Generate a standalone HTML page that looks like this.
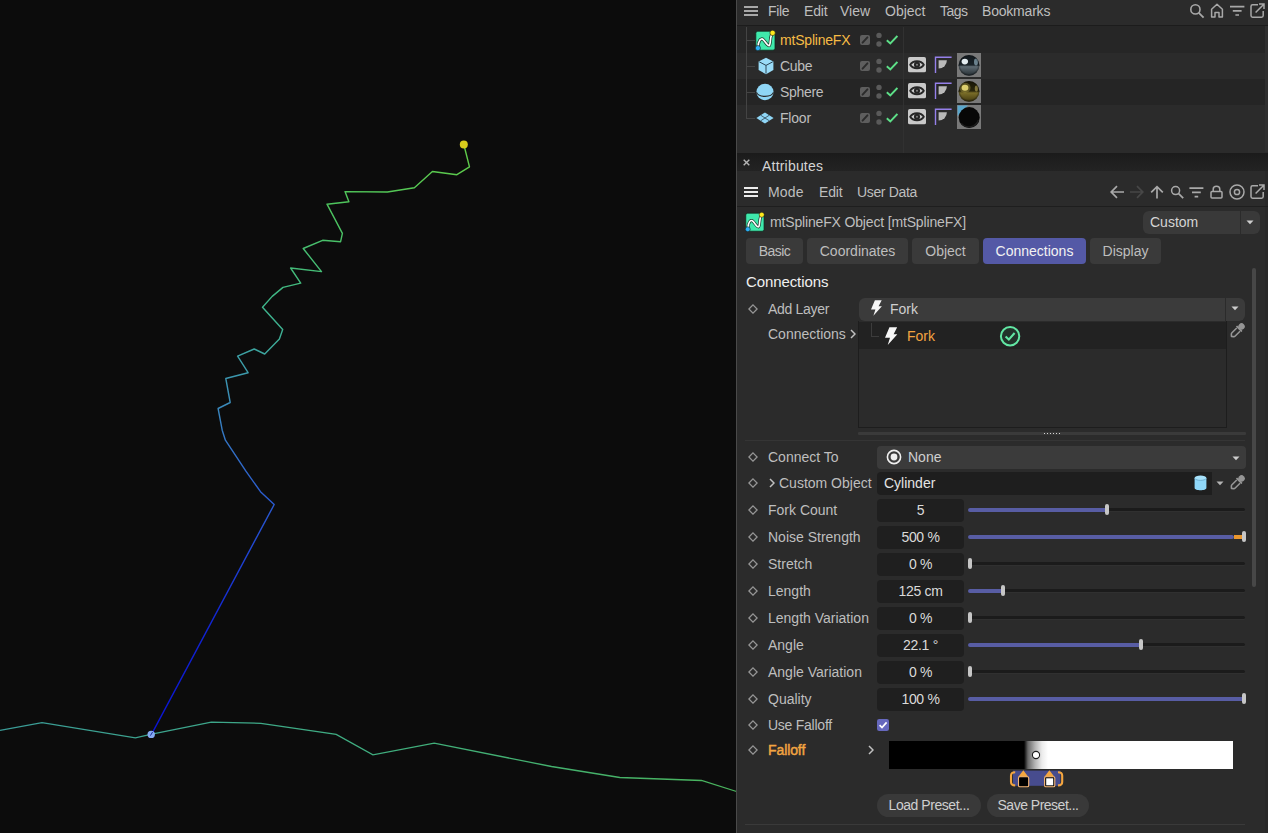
<!DOCTYPE html>
<html lang="en">
<head>
<meta charset="utf-8">
<title>mtSplineFX Attributes</title>
<style>
*{box-sizing:border-box;margin:0;padding:0}
html,body{width:1268px;height:833px;overflow:hidden;background:#0c0c0c}
body{position:relative;font-family:"Liberation Sans",sans-serif;font-size:14px;color:#c4c4c4;line-height:1}
.abs,.t,.bx{position:absolute}
.t{white-space:nowrap;height:18px;line-height:18px;font-size:14px;color:#bebebe}
#vp{position:absolute;left:0;top:0;width:736px;height:833px;background:#0c0c0c}
#panel{position:absolute;left:736px;top:0;width:532px;height:833px;background:#2b2b2b;border-left:1px solid #4a4a4a}
svg{position:absolute;overflow:visible}
.fld{position:absolute;left:877px;width:87px;height:23px;background:#1f1f1f;border-radius:4px;text-align:center;line-height:23px;color:#dadada;font-size:14px;letter-spacing:-0.3px}
.trk{position:absolute;left:968px;width:277px;height:3.5px;background:#1b1b1b;border-radius:2px;box-shadow:0 1px 0 #303030}
.fill{position:absolute;left:968px;height:4px;background:#585da4;border-radius:2px}
.hnd{position:absolute;width:4px;height:11px;background:#c6c6c6;border-radius:2px}
.dia{position:absolute;left:749px;width:8px;height:8px}
.tab{position:absolute;top:238px;height:26px;background:#3a3a3a;border-radius:4px;text-align:center;line-height:26px;font-size:14px;color:#bebebe}
</style>
</head>
<body>
<div id="vp">
<svg width="736" height="833" viewBox="0 0 736 833" style="left:0;top:0">
<defs>
<linearGradient id="g1" gradientUnits="userSpaceOnUse" x1="151" y1="734" x2="464" y2="145">
<stop offset="0" stop-color="#0a12d2"/><stop offset="0.2" stop-color="#1226d2"/><stop offset="0.39" stop-color="#2a5ad0"/><stop offset="0.48" stop-color="#3a88bc"/><stop offset="0.56" stop-color="#3c9fa6"/><stop offset="0.65" stop-color="#3eb68a"/><stop offset="0.82" stop-color="#4cc45e"/><stop offset="1" stop-color="#60cc48"/>
</linearGradient>
<linearGradient id="g2" gradientUnits="userSpaceOnUse" x1="0" y1="0" x2="736" y2="0">
<stop offset="0" stop-color="#3a9c98"/><stop offset="0.5" stop-color="#3fae80"/><stop offset="1" stop-color="#49b45c"/>
</linearGradient>
</defs>
<polyline fill="none" stroke="url(#g2)" stroke-width="1.3" points="0,730.3 42,722.7 135.4,737.9 150.6,734.4 211.3,722.1 260.9,723.3 336.2,734.4 372.9,754.8 434.2,743.1 551.5,766.5 619.8,777.5 701.5,780.5 736.5,791.5"/>
<polyline fill="none" stroke="url(#g1)" stroke-width="1.4" stroke-linejoin="round" points="151.5,734.3 274.2,504.5 260.5,491.7 245.9,471.2 225.4,440.2 222.2,430.2 218.1,408.5 230.2,402.5 225.8,378.5 248.1,372.7 237.6,356.2 254.2,349 264.7,354 279.4,338.9 282.7,329.5 262.5,307.2 272.2,296.4 283,287.4 300.7,283.1 290.6,268 321.5,271.6 303.2,248.5 322.6,240.3 340.6,241.7 342.4,233.4 327,204.2 348.9,201.7 345,191.6 387.4,192 414.4,187.7 432.4,171.5 456.9,174.7 469.5,166.8 463.8,144.5"/>
<circle cx="463.8" cy="144.5" r="4" fill="#d8cc1c"/>
<circle cx="151.2" cy="734.4" r="3.7" fill="#86aaf2"/><path d="M150.4 735.6 L152.6 732" stroke="#1c2a9c" stroke-width="1"/>
</svg>
</div>
<div id="panel"></div>

<!-- ===== Object manager ===== -->
<div class="bx" style="left:737px;top:0;width:531px;height:25px;background:#2b2b2b"></div>
<div class="bx" style="left:737px;top:25px;width:531px;height:1px;background:#1c1c1c"></div>
<div class="bx" style="left:737px;top:26px;width:531px;height:26.5px;background:#262626"></div>
<div class="bx" style="left:737px;top:78.5px;width:531px;height:26px;background:#252525"></div>
<div class="bx" style="left:903px;top:27px;width:1px;height:126px;background:#313131"></div>
<div class="bx" style="left:1265px;top:26px;width:3px;height:126px;background:#2f2f2f"></div>
<svg width="0" height="0" style="left:0;top:0">
<defs>
<symbol id="lay" viewBox="0 0 10 10"><rect x="0" y="0" width="10" height="10" rx="2" fill="#5e5e5e"/><path d="M2.6 7.6 L7.4 2.4" stroke="#2b2b2b" stroke-width="2" stroke-linecap="round"/></symbol>
<symbol id="dots" viewBox="0 0 6 16"><circle cx="3" cy="3.4" r="2.7" fill="#5a5a5a"/><circle cx="3" cy="12" r="2.7" fill="#5a5a5a"/></symbol>
<symbol id="chk" viewBox="0 0 12 10"><path d="M0.8 5.2 L4.3 8.4 L11.4 0.9" fill="none" stroke="#5de088" stroke-width="1.9"/></symbol>
<symbol id="eye" viewBox="0 0 18 15.5"><rect x="0" y="0" width="18" height="15.5" rx="1.8" fill="#c9c9c9"/><path d="M2.2 7.8 C5 3 13 3 15.8 7.8 C13 12.4 5 12.4 2.2 7.8 Z" fill="none" stroke="#262626" stroke-width="1.9" stroke-linejoin="round"/><circle cx="9" cy="7.7" r="2" fill="#8a8a8a" stroke="#262626" stroke-width="2.1"/></symbol>
<symbol id="phong" viewBox="0 0 18 17"><path d="M1.5 17 V1.3 H17.6" fill="none" stroke="#9580ea" stroke-width="1.4"/><path d="M4.6 4.3 H12.9 A8.3 8.3 0 0 1 4.6 12.6 Z" fill="#b9b9b9"/></symbol>
<symbol id="mts" viewBox="0 0 21 21"><rect x="0.8" y="1.2" width="19.2" height="19" rx="2" fill="#3fe9ac" stroke="#10261c" stroke-width="0.8"/><path d="M3 17 C3.4 10.4 6 7.6 8.2 9.6 C10.4 11.6 12.6 16.2 14.2 15.6 C15.6 15 15 9 16.4 5" fill="none" stroke="#1a3a2c" stroke-width="3.2" stroke-linecap="round"/><path d="M3 17 C3.4 10.4 6 7.6 8.2 9.6 C10.4 11.6 12.6 16.2 14.2 15.6 C15.6 15 15 9 16.4 5" fill="none" stroke="#ffffff" stroke-width="1.7" stroke-linecap="round"/><circle cx="17.6" cy="2.9" r="2.7" fill="#ffe91c" stroke="#1c1c1c" stroke-width="0.6"/><circle cx="2.9" cy="18.1" r="2.6" fill="#2ab0f6" stroke="#1c1c1c" stroke-width="0.6"/></symbol>
<radialGradient id="mg1" cx="0.45" cy="0.35" r="0.65"><stop offset="0" stop-color="#dfe6ea"/><stop offset="0.25" stop-color="#6d7a82"/><stop offset="0.6" stop-color="#1c2328"/><stop offset="1" stop-color="#05080a"/></radialGradient>
<radialGradient id="mg2" cx="0.42" cy="0.38" r="0.65"><stop offset="0" stop-color="#e6d98a"/><stop offset="0.3" stop-color="#8a7a2a"/><stop offset="0.65" stop-color="#2a2408"/><stop offset="1" stop-color="#0a0903"/></radialGradient>
</defs>
</svg>
<!-- menu -->
<svg width="14" height="10" style="left:744px;top:6px"><rect x="0" y="0" width="14" height="2" fill="#a8a8a8"/><rect x="0" y="4" width="14" height="2" fill="#a8a8a8"/><rect x="0" y="8" width="14" height="2" fill="#a8a8a8"/></svg>
<div class="t" style="left:768px;top:2px;letter-spacing:-0.3px">File</div>
<div class="t" style="left:804px;top:2px;letter-spacing:-0.2px">Edit</div>
<div class="t" style="left:840px;top:2px">View</div>
<div class="t" style="left:885px;top:2px">Object</div>
<div class="t" style="left:940px;top:2px;letter-spacing:-0.5px">Tags</div>
<div class="t" style="left:982px;top:2px;letter-spacing:-0.2px">Bookmarks</div>
<!-- right icons of OM menu -->
<svg width="16" height="16" style="left:1189px;top:3px"><circle cx="6.4" cy="6.4" r="4.6" fill="none" stroke="#a8a8a8" stroke-width="1.6"/><path d="M9.8 9.8 L14.6 14.6" stroke="#a8a8a8" stroke-width="1.8"/></svg>
<svg width="14" height="15" style="left:1210px;top:3px"><path d="M1.6 14 V6.2 L7 1.2 L12.4 6.2 V14 H9 V9.6 H5 V14 Z" fill="none" stroke="#a8a8a8" stroke-width="1.5" stroke-linejoin="round"/></svg>
<svg width="15" height="12" style="left:1230px;top:5px"><path d="M0 1.6 H14.4 M2.8 5.8 H11.6 M5.4 10 H9" stroke="#a8a8a8" stroke-width="1.7"/></svg>
<svg width="15" height="15" style="left:1250px;top:3px"><path d="M8 1.8 H2.6 Q1 1.8 1 3.4 V12.6 Q1 14.2 2.6 14.2 H11.6 Q13.2 14.2 13.2 12.6 V8" fill="none" stroke="#a8a8a8" stroke-width="1.5"/><path d="M5.6 9.6 L13.6 1.4 M9 1 H14 V6" fill="none" stroke="#a8a8a8" stroke-width="1.5"/></svg>
<!-- tree lines -->
<div class="bx" style="left:746px;top:27px;width:1px;height:92px;background:#444"></div>
<div class="bx" style="left:746px;top:40px;width:9px;height:1px;background:#444"></div>
<div class="bx" style="left:746px;top:66px;width:9px;height:1px;background:#444"></div>
<div class="bx" style="left:746px;top:92px;width:9px;height:1px;background:#444"></div>
<div class="bx" style="left:746px;top:118px;width:9px;height:1px;background:#444"></div>
<!-- row 1 -->
<svg width="21" height="21" style="left:755.3px;top:29.6px"><use href="#mts"/></svg>
<div class="t" style="left:780px;top:31px;color:#f6bb45;letter-spacing:-0.2px">mtSplineFX</div>
<svg width="10" height="10" style="left:860px;top:35px"><use href="#lay"/></svg>
<svg width="6" height="16" style="left:876px;top:32px"><use href="#dots"/></svg>
<svg width="12" height="10" style="left:886.4px;top:34.8px"><use href="#chk"/></svg>
<!-- row 2 cube -->
<svg width="16" height="18" style="left:758px;top:57px"><path d="M8 0.8 L15.4 4.4 V13 L8 17.2 L0.6 13 V4.4 Z" fill="#9adcf8"/><path d="M1.2 4.8 L8 8.4 L14.8 4.8 M8 8.4 V16.6" fill="none" stroke="#2c4656" stroke-width="1"/></svg>
<div class="t" style="left:780px;top:57px;letter-spacing:-0.3px">Cube</div>
<svg width="10" height="10" style="left:860px;top:61px"><use href="#lay"/></svg>
<svg width="6" height="16" style="left:876px;top:58px"><use href="#dots"/></svg>
<svg width="12" height="10" style="left:886.4px;top:60.8px"><use href="#chk"/></svg>
<svg width="18" height="15.5" style="left:908.2px;top:57.1px"><use href="#eye"/></svg>
<svg width="18" height="17" style="left:934px;top:56px"><use href="#phong"/></svg>
<svg width="24" height="24" style="left:957px;top:53px"><defs><clipPath id="cs1"><circle cx="12" cy="12.3" r="10.4"/></clipPath><linearGradient id="lgc" x1="0" y1="0" x2="0" y2="1"><stop offset="0" stop-color="#10161a"/><stop offset="0.5" stop-color="#1a2329"/><stop offset="0.57" stop-color="#5f6b73"/><stop offset="0.8" stop-color="#3a444a"/><stop offset="1" stop-color="#1e262b"/></linearGradient><radialGradient id="rgc" cx="0.5" cy="0.5" r="0.5"><stop offset="0.7" stop-color="#000" stop-opacity="0"/><stop offset="1" stop-color="#000" stop-opacity="0.75"/></radialGradient></defs><rect width="24" height="24" fill="#797979"/><g clip-path="url(#cs1)"><rect width="24" height="24" fill="url(#lgc)"/><ellipse cx="7.8" cy="8.6" rx="3.2" ry="2.8" fill="#e4ecf0"/><ellipse cx="19" cy="9" rx="2" ry="3.4" fill="#7f9aa8" opacity="0.8"/><rect width="24" height="24" fill="url(#rgc)"/></g></svg>
<!-- row 3 sphere -->
<svg width="18" height="18" style="left:756px;top:83px"><ellipse cx="9" cy="9" rx="8.6" ry="8.2" fill="#8fd6f6"/><path d="M0.5 9.4 C2.6 14.6 15.4 14.6 17.5 9.4" fill="none" stroke="#2b2b2b" stroke-width="1.2"/></svg>
<div class="t" style="left:780px;top:83px;letter-spacing:-0.3px">Sphere</div>
<svg width="10" height="10" style="left:860px;top:87px"><use href="#lay"/></svg>
<svg width="6" height="16" style="left:876px;top:84px"><use href="#dots"/></svg>
<svg width="12" height="10" style="left:886.4px;top:86.8px"><use href="#chk"/></svg>
<svg width="18" height="15.5" style="left:908.2px;top:83.1px"><use href="#eye"/></svg>
<svg width="18" height="17" style="left:934px;top:82px"><use href="#phong"/></svg>
<svg width="24" height="24" style="left:957px;top:79px"><defs><clipPath id="cs2"><circle cx="12" cy="12.3" r="10.4"/></clipPath><linearGradient id="lgg" x1="0" y1="0" x2="0" y2="1"><stop offset="0" stop-color="#141204"/><stop offset="0.5" stop-color="#2a260c"/><stop offset="0.58" stop-color="#7a6d28"/><stop offset="0.82" stop-color="#554b18"/><stop offset="1" stop-color="#2a2408"/></linearGradient></defs><rect width="24" height="24" fill="#797979"/><g clip-path="url(#cs2)"><rect width="24" height="24" fill="url(#lgg)"/><ellipse cx="8" cy="8.8" rx="3.4" ry="3" fill="#e8dc7e"/><ellipse cx="8" cy="8.8" rx="5.6" ry="5" fill="#c8b850" opacity="0.35"/><ellipse cx="19.4" cy="9.6" rx="1.6" ry="3" fill="#a89a50" opacity="0.7"/><rect width="24" height="24" fill="url(#rgc)"/></g></svg>
<!-- row 4 floor -->
<svg width="18" height="12" style="left:756px;top:112px"><path d="M9 0.4 L17.6 6 L9 11.6 L0.4 6 Z" fill="#8fd6f6"/><path d="M4.7 3.2 L13.3 8.8 M13.3 3.2 L4.7 8.8" stroke="#2f4250" stroke-width="0.8"/></svg>
<div class="t" style="left:780px;top:109px;letter-spacing:-0.2px">Floor</div>
<svg width="10" height="10" style="left:860px;top:113px"><use href="#lay"/></svg>
<svg width="6" height="16" style="left:876px;top:110px"><use href="#dots"/></svg>
<svg width="12" height="10" style="left:886.4px;top:112.8px"><use href="#chk"/></svg>
<svg width="18" height="15.5" style="left:908.2px;top:109.1px"><use href="#eye"/></svg>
<svg width="18" height="17" style="left:934px;top:108px"><use href="#phong"/></svg>
<svg width="24" height="24" style="left:957px;top:105px"><rect width="24" height="24" fill="#797979"/><path d="M0.6 0.6 H11 L0.6 11 Z" fill="#5aa6cb"/><circle cx="12.2" cy="12.6" r="10.5" fill="#070707"/><path d="M4.4 18.4 A10 10 0 0 0 21.4 15" fill="none" stroke="#232323" stroke-width="1.4" opacity="0.8"/></svg>
<!-- OM_END -->

<!-- ===== Attribute manager ===== -->
<div class="bx" style="left:1265px;top:171px;width:3px;height:662px;background:#282828"></div>
<div class="bx" style="left:737px;top:152.5px;width:531px;height:18.5px;background:linear-gradient(to bottom,#1b1b1b,#232323)"></div>

<svg width="0" height="0" style="left:0;top:0">
<defs>
<symbol id="dmd" viewBox="0 0 10 10"><path d="M5 0.9 L9.1 5 L5 9.1 L0.9 5 Z" fill="none" stroke="#969696" stroke-width="1.3"/></symbol>
<symbol id="gt" viewBox="0 0 6 10"><path d="M1 1 L5 5 L1 9" fill="none" stroke="#c0c0c0" stroke-width="1.5"/></symbol>
<symbol id="bolt" viewBox="0 0 11 16"><path d="M3.9 0.3 H10.7 L7.6 6.3 H10.9 L2.4 15.8 L4.4 9.4 H0 Z" fill="#f6f6f6"/></symbol>
<symbol id="drp" viewBox="0 0 16 16"><g transform="rotate(45 8 8)"><circle cx="8" cy="2.6" r="3" fill="#959595"/><rect x="4.4" y="4.9" width="7.2" height="1.7" rx="0.5" fill="#959595"/><path d="M5.8 6.8 V13.2 Q5.8 14.2 6.6 14.8 L8 16 L9.4 14.8 Q10.2 14.2 10.2 13.2 V6.8" fill="none" stroke="#959595" stroke-width="1.5" stroke-linejoin="round"/></g></symbol>
<symbol id="arr" viewBox="0 0 8 5"><path d="M0.5 0.4 H7.5 L4 4.2 Z" fill="#cdcdcd"/></symbol>
</defs>
</svg>
<!-- title band -->
<svg width="7" height="7" style="left:742.6px;top:159.2px"><path d="M0.7 0.7 L6.3 6.3 M6.3 0.7 L0.7 6.3" stroke="#b4b4b4" stroke-width="1.4"/></svg>
<div class="t" style="left:762px;top:157px;color:#d4d4d4;letter-spacing:0.2px">Attributes</div>
<!-- AM menu bar -->
<div class="bx" style="left:737px;top:206px;width:531px;height:1px;background:#1e1e1e"></div>
<svg width="14" height="10" style="left:744px;top:187px"><rect x="0" y="0" width="14" height="2" fill="#ececec"/><rect x="0" y="4" width="14" height="2" fill="#ececec"/><rect x="0" y="8" width="14" height="2" fill="#ececec"/></svg>
<div class="t" style="left:768px;top:183px;letter-spacing:0.2px">Mode</div>
<div class="t" style="left:819px;top:183px;letter-spacing:-0.2px">Edit</div>
<div class="t" style="left:857px;top:183px;letter-spacing:-0.35px">User Data</div>
<!-- nav icons -->
<svg width="15" height="14" style="left:1110px;top:185px"><path d="M14 7 H1.6 M7 1.2 L1.2 7 L7 12.8" fill="none" stroke="#a9a9a9" stroke-width="1.7"/></svg>
<svg width="15" height="14" style="left:1129px;top:185px"><path d="M1 7 H13.4 M8 1.2 L13.8 7 L8 12.8" fill="none" stroke="#474747" stroke-width="1.7"/></svg>
<svg width="14" height="14" style="left:1150px;top:185px"><path d="M7 13.6 V1.6 M1.2 7.4 L7 1.6 L12.8 7.4" fill="none" stroke="#a9a9a9" stroke-width="1.7"/></svg>
<svg width="14" height="14" style="left:1170px;top:185px"><circle cx="5.6" cy="5.6" r="4" fill="none" stroke="#a9a9a9" stroke-width="1.5"/><path d="M8.6 8.6 L13.2 13.2" stroke="#a9a9a9" stroke-width="1.7"/></svg>
<svg width="15" height="12" style="left:1189px;top:187px"><path d="M0.4 1.2 H14.4 M3 5.4 H11.8 M5.6 9.6 H9.2" stroke="#a9a9a9" stroke-width="1.7"/></svg>
<svg width="13" height="14" style="left:1210px;top:185px"><path d="M3.2 6.4 V4.2 C3.2 0.2 9.8 0.2 9.8 4.2 V6.4" fill="none" stroke="#a9a9a9" stroke-width="1.5"/><rect x="1" y="6.6" width="11" height="6.4" rx="1" fill="none" stroke="#a9a9a9" stroke-width="1.5"/></svg>
<svg width="16" height="16" style="left:1229px;top:184px"><circle cx="8" cy="8" r="7" fill="none" stroke="#a9a9a9" stroke-width="1.5"/><circle cx="8" cy="8" r="2.6" fill="none" stroke="#a9a9a9" stroke-width="1.5"/></svg>
<svg width="15" height="15" style="left:1250px;top:184px"><path d="M8 1.8 H2.6 Q1 1.8 1 3.4 V12.6 Q1 14.2 2.6 14.2 H11.6 Q13.2 14.2 13.2 12.6 V8" fill="none" stroke="#a9a9a9" stroke-width="1.5"/><path d="M5.6 9.6 L13.6 1.4 M9 1 H14 V6" fill="none" stroke="#a9a9a9" stroke-width="1.5"/></svg>
<!-- header -->
<svg width="20" height="20" style="left:745px;top:212px"><use href="#mts"/></svg>
<div class="t" style="left:770px;top:213px;letter-spacing:-0.16px">mtSplineFX Object [mtSplineFX]</div>
<div class="bx" style="left:1143px;top:211px;width:117px;height:23px;background:#393939;border-radius:6px"></div>
<div class="bx" style="left:1240px;top:211px;width:1px;height:23px;background:#2b2b2b"></div>
<div class="t" style="left:1150px;top:213px;color:#d4d4d4">Custom</div>
<svg width="8" height="5" style="left:1246px;top:220px"><use href="#arr"/></svg>
<!-- tabs -->
<div class="tab" style="left:746px;width:57px;letter-spacing:-0.5px">Basic</div>
<div class="tab" style="left:807px;width:101px">Coordinates</div>
<div class="tab" style="left:912px;width:67px">Object</div>
<div class="tab" style="left:983px;width:103px;background:#5459a6;color:#f2f2f2">Connections</div>
<div class="tab" style="left:1090px;width:71px">Display</div>
<!-- section heading -->
<div class="t" style="left:746px;top:272.5px;font-size:15px;color:#f0f0f0;letter-spacing:-0.1px">Connections</div>
<!-- scrollbar -->
<div class="bx" style="left:1252px;top:268px;width:4px;height:319px;background:#474747;border-radius:2px"></div>
<!-- Add layer -->
<svg width="10" height="10" style="left:748px;top:304px"><use href="#dmd"/></svg>
<div class="t" style="left:768px;top:300px;letter-spacing:-0.3px">Add Layer</div>
<div class="bx" style="left:859px;top:298px;width:386px;height:23px;background:#3b3b3b;border-radius:6px 6px 6px 6px"></div>
<div class="bx" style="left:1225px;top:298px;width:1px;height:23px;background:#2b2b2b"></div>
<svg width="11" height="16" style="left:870.9px;top:300.4px"><use href="#bolt"/></svg>
<div class="t" style="left:890px;top:300px;color:#cfcfcf">Fork</div>
<svg width="8" height="5" style="left:1231px;top:306px"><use href="#arr"/></svg>
<!-- connections list -->
<div class="t" style="left:768px;top:325px">Connections</div>
<svg width="6" height="10" style="left:850px;top:329px"><use href="#gt"/></svg>
<div class="bx" style="left:858px;top:321px;width:369px;height:107px;background:#2b2b2b;border:1px solid #1d1d1d;border-top:none"></div>
<div class="bx" style="left:859px;top:322px;width:367px;height:27px;background:#222222"></div>
<div class="bx" style="left:871px;top:323px;width:1px;height:14px;background:#3c3c3c"></div>
<div class="bx" style="left:871px;top:336px;width:8px;height:1px;background:#3c3c3c"></div>
<svg width="12.5" height="18.2" style="left:884.9px;top:326.7px"><use href="#bolt"/></svg>
<div class="t" style="left:907px;top:327px;color:#f2a441">Fork</div>
<svg width="22" height="22" style="left:999px;top:325px"><circle cx="11.1" cy="11.3" r="9.2" fill="#22332b" stroke="#62e7a4" stroke-width="2"/><path d="M6.6 11.6 L9.8 14.6 L15.6 8" fill="none" stroke="#62e7a4" stroke-width="2.1"/></svg>
<svg width="17" height="17" style="left:1228.6px;top:322.4px"><use href="#drp"/></svg>
<!-- drag handle + separator -->
<div class="bx" style="left:858px;top:432px;width:388px;height:3px;background:#3a3a3a;border-radius:1px"></div>
<svg width="17" height="3" style="left:1044px;top:432px"><g fill="#d4d4d4"><rect x="0" y="1" width="1" height="1"/><rect x="3" y="1" width="1" height="1"/><rect x="6" y="1" width="1" height="1"/><rect x="9" y="1" width="1" height="1"/><rect x="12" y="1" width="1" height="1"/><rect x="15" y="1" width="1" height="1"/></g></svg>
<div class="bx" style="left:745px;top:440px;width:500px;height:1px;background:#353535"></div>
<svg width="10" height="10" style="left:748px;top:452px"><use href="#dmd"/></svg>
<div class="t" style="left:768px;top:448px">Connect To</div>
<div class="bx" style="left:877px;top:446px;width:369px;height:23px;background:#3b3b3b;border-radius:4px"></div>
<svg width="16" height="16" style="left:886px;top:449px"><circle cx="8" cy="8" r="6.6" fill="none" stroke="#f0f0f0" stroke-width="1.6"/><circle cx="8" cy="8" r="3.4" fill="#f0f0f0"/></svg>
<div class="t" style="left:908px;top:448px;color:#cfcfcf">None</div>
<svg width="8" height="5" style="left:1232px;top:456px"><use href="#arr"/></svg>
<svg width="10" height="10" style="left:748px;top:478px"><use href="#dmd"/></svg>
<svg width="6" height="10" style="left:769px;top:478px"><use href="#gt"/></svg>
<div class="t" style="left:779px;top:474px">Custom Object</div>
<div class="bx" style="left:877px;top:472px;width:335px;height:22.5px;background:#1e1e1e;border-radius:4px 0 0 4px"></div>
<div class="t" style="left:884px;top:474px;color:#e4e4e4">Cylinder</div>
<svg width="13" height="16" style="left:1194px;top:475px"><path d="M0.6 3 V13 C0.6 16 12.4 16 12.4 13 V3 Z" fill="#8fd7f9"/><ellipse cx="6.5" cy="3" rx="5.9" ry="2.4" fill="#a6e1fb"/><path d="M0.7 3.4 C2 6 11 6 12.3 3.4" fill="none" stroke="#5a9cc0" stroke-width="0.7"/></svg>
<svg width="8" height="5" style="left:1216.2px;top:481.4px" opacity="0.85"><use href="#arr"/></svg>
<svg width="17" height="17" style="left:1228.6px;top:474px"><use href="#drp"/></svg>
<svg width="10" height="10" style="left:748px;top:505px"><use href="#dmd"/></svg>
<div class="t" style="left:768px;top:501px">Fork Count</div>
<div class="fld" style="top:499px">5</div>
<div class="trk" style="top:507.5px"></div>
<div class="fill" style="top:507.5px;width:139px"></div>
<div class="hnd" style="left:1105px;top:504px"></div>
<svg width="10" height="10" style="left:748px;top:532px"><use href="#dmd"/></svg>
<div class="t" style="left:768px;top:528px">Noise Strength</div>
<div class="fld" style="top:526px">500 %</div>
<div class="trk" style="top:534.5px"></div>
<div class="fill" style="top:534.5px;width:266px"></div>
<div class="fill" style="top:534.5px;left:1234px;width:10px;background:#e8962e;border-radius:0"></div>
<div class="hnd" style="left:1242px;top:531px"></div>
<svg width="10" height="10" style="left:748px;top:559px"><use href="#dmd"/></svg>
<div class="t" style="left:768px;top:555px">Stretch</div>
<div class="fld" style="top:553px">0 %</div>
<div class="trk" style="top:561.5px"></div>
<div class="hnd" style="left:968px;top:558px"></div>
<svg width="10" height="10" style="left:748px;top:586px"><use href="#dmd"/></svg>
<div class="t" style="left:768px;top:582px">Length</div>
<div class="fld" style="top:580px">125 cm</div>
<div class="trk" style="top:588.5px"></div>
<div class="fill" style="top:588.5px;width:35px"></div>
<div class="hnd" style="left:1001px;top:585px"></div>
<svg width="10" height="10" style="left:748px;top:613px"><use href="#dmd"/></svg>
<div class="t" style="left:768px;top:609px">Length Variation</div>
<div class="fld" style="top:607px">0 %</div>
<div class="trk" style="top:615.5px"></div>
<div class="hnd" style="left:968px;top:612px"></div>
<svg width="10" height="10" style="left:748px;top:640px"><use href="#dmd"/></svg>
<div class="t" style="left:768px;top:636px">Angle</div>
<div class="fld" style="top:634px">22.1 °</div>
<div class="trk" style="top:642.5px"></div>
<div class="fill" style="top:642.5px;width:173px"></div>
<div class="hnd" style="left:1139px;top:639px"></div>
<svg width="10" height="10" style="left:748px;top:667px"><use href="#dmd"/></svg>
<div class="t" style="left:768px;top:663px">Angle Variation</div>
<div class="fld" style="top:661px">0 %</div>
<div class="trk" style="top:669.5px"></div>
<div class="hnd" style="left:968px;top:666px"></div>
<svg width="10" height="10" style="left:748px;top:694px"><use href="#dmd"/></svg>
<div class="t" style="left:768px;top:690px">Quality</div>
<div class="fld" style="top:688px">100 %</div>
<div class="trk" style="top:696.5px"></div>
<div class="fill" style="top:696.5px;width:276px"></div>
<div class="hnd" style="left:1242px;top:693px"></div>
<svg width="10" height="10" style="left:748px;top:720px"><use href="#dmd"/></svg>
<div class="t" style="left:768px;top:716px;letter-spacing:-0.25px">Use Falloff</div>
<svg width="12" height="12" style="left:877px;top:719px"><rect width="12" height="12" rx="2.2" fill="#6668bd"/><path d="M2.6 6.2 L5 8.6 L9.6 3.4" fill="none" stroke="#fff" stroke-width="1.7"/></svg>
<svg width="10" height="10" style="left:748px;top:745px"><use href="#dmd"/></svg>
<div class="t" style="left:768px;top:741px;color:#f2a441;-webkit-text-stroke:0.45px #f2a441;letter-spacing:-0.1px">Falloff</div>
<svg width="6" height="10" style="left:868px;top:745px"><use href="#gt"/></svg>
<div class="bx" style="left:889px;top:741px;width:344px;height:28px;background:linear-gradient(to right,#000 0,#000 135px,#6a6a6a 139px,#b4b4b4 146px,#ececec 153px,#fff 159px,#fff 100%)"></div>
<svg width="10" height="10" style="left:1031.4px;top:749.6px"><circle cx="5" cy="5" r="3.6" fill="#fff" stroke="#1c1c1c" stroke-width="1.1"/></svg>
<svg width="56" height="18" style="left:1009px;top:770px">
<rect x="4" y="0.6" width="47.4" height="15.2" fill="#474c8e"/>
<path d="M6.2 2.2 Q2 2.2 2 5.6 V12 Q2 15.4 6.2 15.4" fill="none" stroke="#f4a640" stroke-width="2.1"/>
<path d="M49 2.2 Q53.2 2.2 53.2 5.6 V12 Q53.2 15.4 49 15.4" fill="none" stroke="#f4a640" stroke-width="2.1"/>
<path d="M14.3 0.2 L19.4 6.9 H9.2 Z" fill="#f4a640"/><rect x="9.5" y="6.8" width="10.2" height="10" rx="1.3" fill="#000" stroke="#f7b877" stroke-width="1.1"/>
<path d="M40.4 0.2 L45.5 6.9 H35.3 Z" fill="#f4a640"/><rect x="35.6" y="6.8" width="10.2" height="10" rx="1.3" fill="#0a0a0a" stroke="#f7b877" stroke-width="1.1"/><rect x="37.2" y="8.3" width="7" height="7" fill="#fff"/>
</svg>
<div class="bx" style="left:877px;top:794px;width:104px;height:23px;background:#393939;border-radius:11.5px;text-align:center;line-height:23px;font-size:14px;color:#cfcfcf;letter-spacing:-0.45px">Load Preset...</div>
<div class="bx" style="left:987px;top:794px;width:102px;height:23px;background:#393939;border-radius:11.5px;text-align:center;line-height:23px;font-size:14px;color:#cfcfcf;letter-spacing:-0.5px">Save Preset...</div>
<div class="bx" style="left:745px;top:824px;width:500px;height:1px;background:#3a3a3a"></div>



</body>
</html>
